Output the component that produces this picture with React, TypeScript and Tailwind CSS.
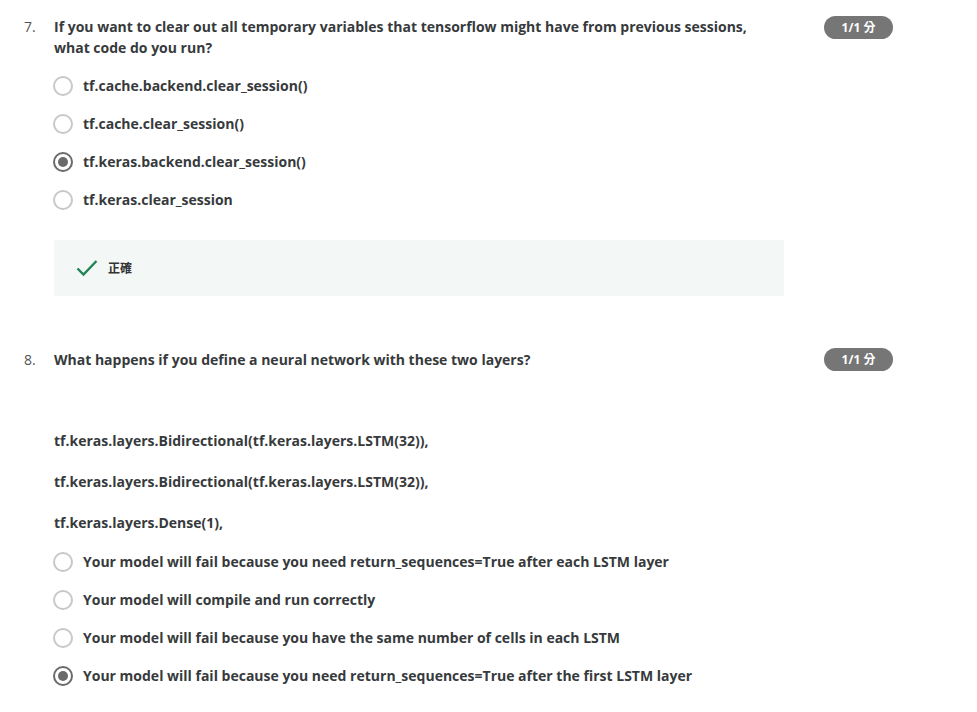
import React from "react";

function Radio({ checked }: { checked?: boolean }) {
  return checked ? (
    <span className="flex h-5 w-5 shrink-0 items-center justify-center rounded-full border-2 border-[#6a6a6a]">
      <span className="h-[10px] w-[10px] rounded-full bg-[#6a6a6a]" />
    </span>
  ) : (
    <span className="h-5 w-5 shrink-0 rounded-full border-2 border-[#c8c8c8]" />
  );
}

function Badge() {
  return (
    <div className="flex h-[23px] w-[69px] items-center justify-center rounded-full bg-[#767676] text-[12px] font-bold text-white [font-family:'Open_Sans','Noto_Sans_CJK_TC',sans-serif]">
      1/1 分
    </div>
  );
}

function Options({ items, selected }: { items: string[]; selected: number }) {
  return (
    <div className="-ml-px flex flex-col gap-[18px]">
      {items.map((t, i) => (
        <div key={i} className="flex h-5 items-center gap-[10px]">
          <Radio checked={i === selected} />
          <span className="text-[14px] font-bold leading-[20px] text-[#373a3c]">{t}</span>
        </div>
      ))}
    </div>
  );
}

export default function App() {
  return (
    <div className="min-h-[712px] w-[977px] bg-white pl-[24px] pt-[16px] [font-family:'Open_Sans','Noto_Sans_CJK_TC',sans-serif]">
      {/* Q7 */}
      <div className="flex">
        <div className="w-[30px] shrink-0 text-[14px] leading-[21px] text-[#555]">7.</div>
        <div className="w-[730px] shrink-0">
          <p className="w-[720px] text-[14px] font-bold leading-[21px] text-[#373a3c]">
            If you want to clear out all temporary variables that tensorflow might have from previous sessions, what code do you run?
          </p>
          <div className="mt-[18px]">
            <Options
              selected={2}
              items={[
                "tf.cache.backend.clear_session()",
                "tf.cache.clear_session()",
                "tf.keras.backend.clear_session()",
                "tf.keras.clear_session",
              ]}
            />
          </div>
          <div className="mt-[30px] flex h-[56px] items-center bg-[#f3f8f6] pl-[22px]">
            <svg width="22" height="18" viewBox="0 0 22 18" className="shrink-0">
              <path d="M1.5 9.5 L7.5 15.5 L20.5 2" fill="none" stroke="#1f8354" strokeWidth="2.4" />
            </svg>
            <span className="ml-[10px] text-[12px] font-bold text-[#333] [font-family:'Noto_Sans_CJK_TC',sans-serif]">正確</span>
          </div>
        </div>
        <div className="ml-[40px]">
          <Badge />
        </div>
      </div>

      {/* Q8 */}
      <div className="mt-[53px] flex">
        <div className="w-[30px] shrink-0 text-[14px] leading-[21px] text-[#555]">8.</div>
        <div className="w-[730px] shrink-0">
          <p className="text-[14px] font-bold leading-[21px] text-[#373a3c]">
            What happens if you define a neural network with these two layers?
          </p>
          <div className="mt-[60px] flex flex-col gap-[20px] text-[14px] font-bold leading-[21px] text-[#373a3c]">
            <p>tf.keras.layers.Bidirectional(tf.keras.layers.LSTM(32)),</p>
            <p>tf.keras.layers.Bidirectional(tf.keras.layers.LSTM(32)),</p>
            <p>tf.keras.layers.Dense(1),</p>
          </div>
          <div className="mt-[19px]">
            <Options
              selected={3}
              items={[
                "Your model will fail because you need return_sequences=True after each LSTM layer",
                "Your model will compile and run correctly",
                "Your model will fail because you have the same number of cells in each LSTM",
                "Your model will fail because you need return_sequences=True after the first LSTM layer",
              ]}
            />
          </div>
        </div>
        <div className="ml-[40px] -mt-[1px]">
          <Badge />
        </div>
      </div>
    </div>
  );
}
